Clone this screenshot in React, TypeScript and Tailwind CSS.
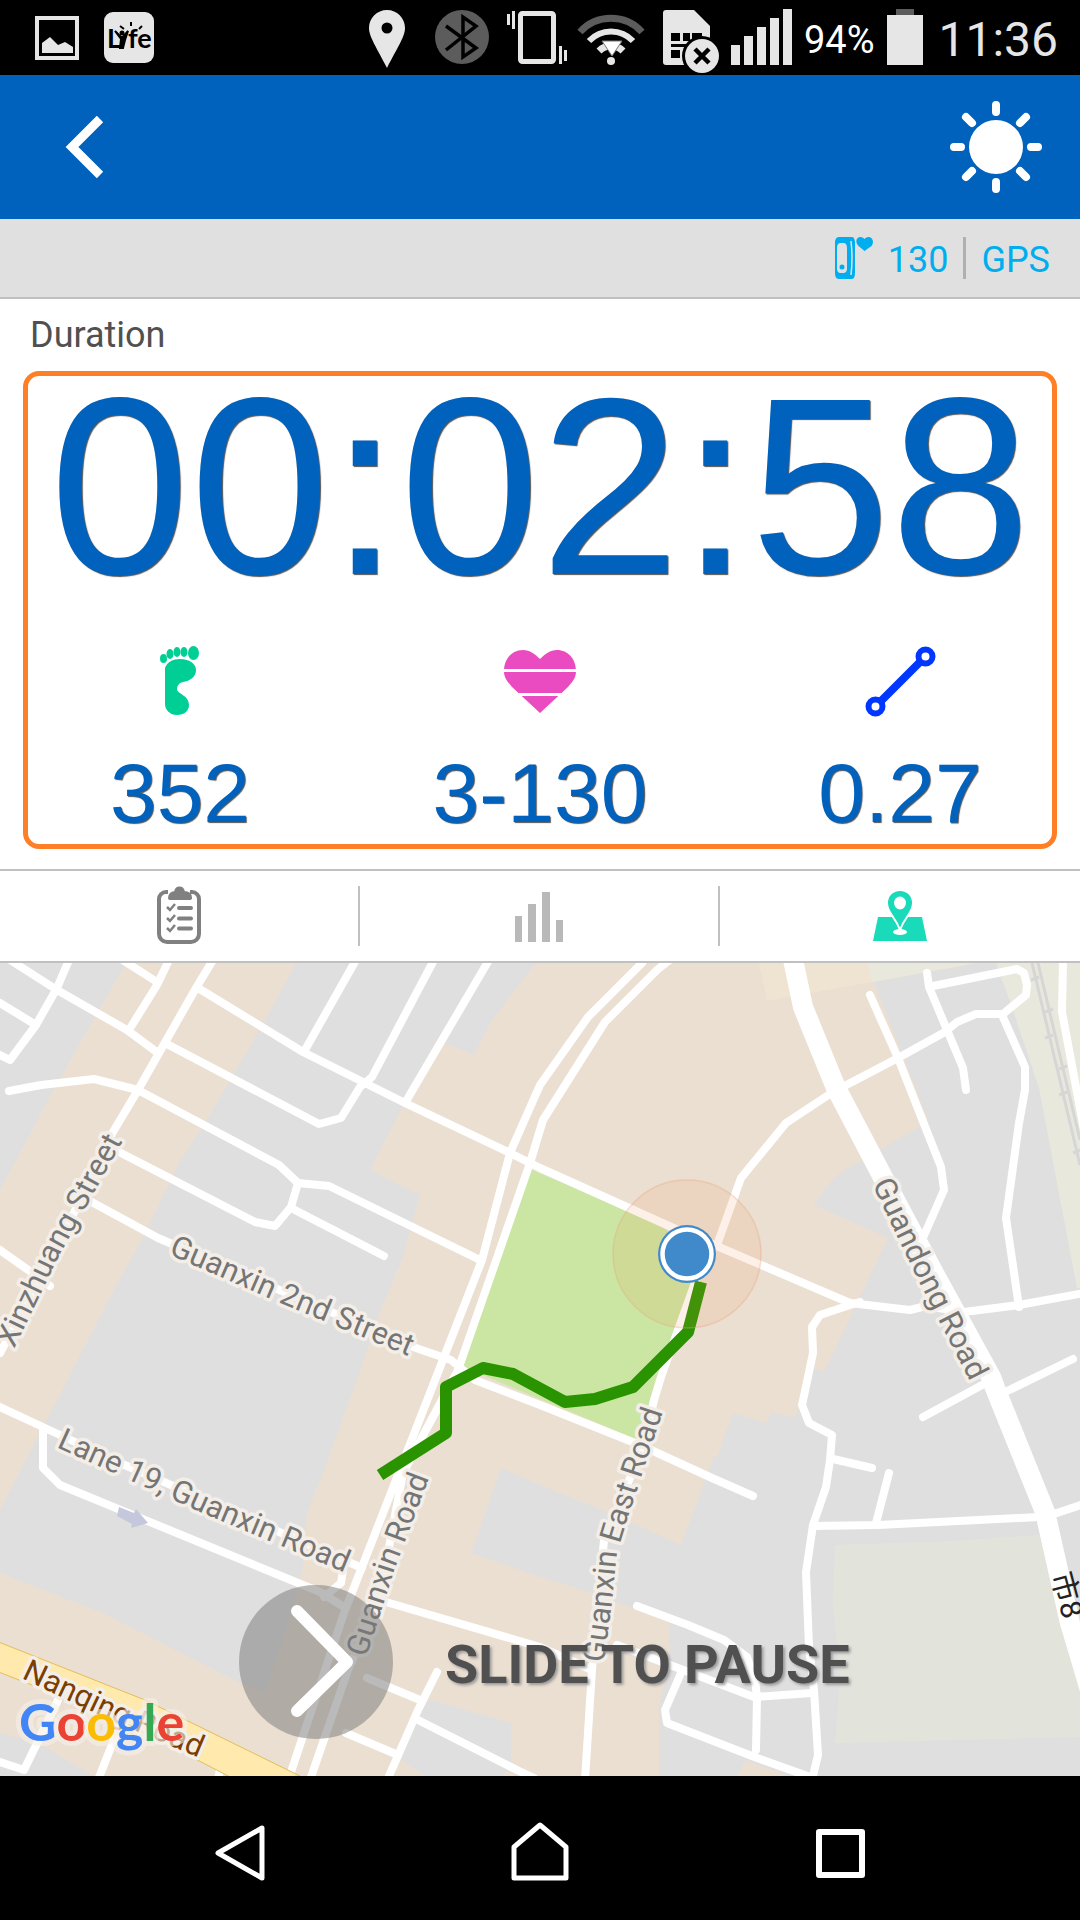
import React, { useState } from 'react';

const tabs = [
  { id: 'log', label: 'Workout log' },
  { id: 'chart', label: 'Charts' },
  { id: 'map', label: 'Map' },
];

// Blocks drawn over the beige base of the map
const greyBlocks = [
  '0,963 126,963 96,1015 52,1093 0,1190',
  '296,963 269,1013 238,1067 207,1120 179,1163 145,1233 110,1297 69,1377 45,1423 0,1510 0,1573 103,1613 234,1680 265,1692 286,1630 303,1567 307,1513 324,1470 358,1377 368,1347 382,1307 403,1257 420,1195 370,1170 401,1110 437,1040 474,1055 492,1020 536,963',
  '874,982 977,963 1080,963 1080,1776 659,1776 659,1707 669,1663 670,1623 592,1593 540,1577 471,1553 501,1468 540,1485 609,1513 681,1545 714,1456 717,1457 733,1413 767,1423 771,1412 795,1418 814,1368 824,1372 860,1297 888,1238 814,1205 826,1187 840,1173 879,1150 919,1127 929,1122',
  '424,1698 511,1723 511,1770 500,1776 425,1776 401,1760',
  '0,1733 38,1743 93,1776 0,1776',
];

const roads = [
  '10,960 57,990 127,1030 158,1053',
  '69,960 57,988 36,1025 10,1060 0,1055',
  '0,1003 36,1025',
  '124,961 157,982',
  '169,960 157,985 129,1030',
  '213,960 196,988 138,1090 110,1137 69,1223 0,1353',
  '198,988 303,1052 405,1103 510,1153 540,1168 678,1230 719,1247 850,1303 910,1310 926,1306 964,1312 1019,1305 1084,1293',
  '356,960 305,1050',
  '434,960 372,1077 360,1087 341,1118 319,1124 165,1043',
  '489,960 405,1103',
  '9,1091 41,1085 94,1079 138,1090 279,1165 298,1183 329,1186 480,1260',
  '119,1152 255,1222 275,1226 291,1207 298,1183',
  '291,1208 384,1256',
  '88,1200 158,1238 310,1303 413,1347 451,1360 475,1380 540,1405 640,1445 712,1478 753,1496',
  '0,1250 31,1272 50,1286',
  '642,963 588,1017 540,1085 510,1153 482,1260 444,1357 439,1370 344,1613 291,1772',
  '672,958 657,970 605,1022 543,1120 530,1163 458,1370 403,1473 379,1600 348,1670 310,1780',
  '717,1245 741,1178 786,1123 833,1092 898,1058 945,1032 957,1022 976,1014 1003,1014 1026,995 1027,985 1024,973 1017,969 933,986',
  '927,973 929,987 963,1068 966,1090',
  '870,995 898,1058 941,1167 944,1190 922,1240',
  '1002,1015 1025,1067 1025,1090 1019,1123 1006,1218 1019,1307',
  '1063,960 1062,1012 1084,1130',
  '860,1302 850,1305 820,1315 812,1327 813,1353 808,1377 802,1405 809,1423 832,1435 830,1460 826,1487 813,1525 806,1572 809,1647 814,1690 818,1755 812,1780',
  '833,1459 872,1468',
  '889,1473 876,1523',
  '813,1526 878,1525 1039,1517 1057,1513 1084,1504',
  '923,1417 984,1384',
  '1003,1393 1073,1359',
  '697,1277 661,1377 654,1400 643,1447 604,1540 592,1670 585,1780',
  '637,1606 688,1625 724,1640 747,1657 755,1680 757,1697 756,1750',
  '617,1645 678,1668 754,1697 812,1693',
  '681,1673 665,1710 667,1723 757,1758 813,1778',
  '386,1602 540,1647 592,1670',
  '0,1407 45,1428 120,1463 344,1560 362,1568',
  '43,1428 43,1468 60,1485 320,1592 344,1607',
  '343,1570 341,1583 324,1597',
  '367,1678 420,1700',
  '437,1672 418,1710 389,1776',
  '418,1720 517,1770 534,1778',
  '346,1733 398,1755',
  '0,1762 24,1770 58,1700',
  '98,1780 115,1737',
  '218,1780 220,1770',
];

const streets = [
  { id: 'xinzhuang', name: 'Xinzhuang Street', d: 'M14 1349 L60 1254 L130 1128', color: '#757575' },
  { id: 'guanxin2', name: 'Guanxin 2nd Street', d: 'M168 1254 L280 1303 L430 1365', color: '#757575' },
  { id: 'lane19', name: 'Lane 19, Guanxin Road', d: 'M56 1447 L200 1512 L372 1584', color: '#757575' },
  { id: 'guanxin', name: 'Guanxin Road', d: 'M366 1658 L395 1568 L436 1460', color: '#757575' },
  { id: 'guanxineast', name: 'Guanxin East Road', d: 'M604 1663 L611 1610 L617 1553 L627 1520 L670 1390', color: '#757575' },
  { id: 'guandong', name: 'Guandong Road', d: 'M872 1184 L920 1284 L980 1401', color: '#757575' },
  { id: 'nanqing', name: 'Nanqing Road', d: 'M21 1678 L110 1720 L216 1765', color: '#7a3e00' },
];

function StatusBar() {
  return (
    <div className="flex h-[75px] items-center justify-between bg-black pl-[35px] pr-[22px] text-[#e6e6e6]">
      <div className="flex items-center gap-6">
        <svg className="h-[75px] w-[45px]" viewBox="35 0 45 75" fill="none">
          <rect x="37" y="18" width="40" height="40" stroke="#e6e6e6" strokeWidth="4" />
          <path d="M42 53v-10l8-6 8 8 7-3 8 5v6z" fill="#e6e6e6" />
        </svg>
        <svg className="h-[75px] w-[50px]" viewBox="104 0 50 75">
          <rect x="104" y="12" width="50" height="51" rx="9" fill="#e6e6e6" />
          <text x="107" y="48" fontSize="27" fontFamily="Lato, sans-serif" fontWeight="700" fill="#000">L</text>
          <text x="128" y="48" fontSize="27" fontFamily="Lato, sans-serif" fontWeight="700" fill="#000">fe</text>
          <circle cx="122" cy="33" r="2.5" />
          <path d="M115 31l6 6h2l5-6-3 9-2 8h-3l1-9zM120 26l4 3M131 22v4M142 26l-3 3" stroke="#000" strokeWidth="2" fill="#000" />
        </svg>
      </div>
      <div className="flex items-center gap-3">
        <svg className="h-[75px] w-14" viewBox="366 0 56 75">
          <path fillRule="evenodd" fill="#e6e6e6" d="M388 10c10 0 18 8 18 18 0 9-8 20-18 40-10-20-18-31-18-40 0-10 8-18 18-18zm0 12.500a5.500 5.500 0 1 0 0 11 5.500 5.500 0 1 0 0-11z" />
        </svg>
        <svg className="h-[75px] w-[61px]" viewBox="434 0 61 75">
          <circle cx="463" cy="37" r="27" fill="#5c5c5c" />
          <path d="M447 26l30 22-13 9V17l13 9-30 24" fill="none" stroke="#000" strokeWidth="3.500" />
        </svg>
        <svg className="h-[75px] w-[60px] overflow-visible" viewBox="507 0 60 75" fill="#e6e6e6">
          <rect x="521.500" y="13.500" width="33" height="48" rx="2" fill="none" stroke="#e6e6e6" strokeWidth="5" />
          <path d="M508 14h3v11h-3zM513 11h3v18h-3zM560 46h3v18h-3zM565 50h3v11h-3z" />
        </svg>
        <svg className="h-[75px] w-[71px] overflow-visible" viewBox="579 0 71 75" fill="none">
          <path d="M581 32a42 42 0 0 1 62 0" stroke="#5c5c5c" strokeWidth="7" />
          <path d="M590 41a30 30 0 0 1 44 0" stroke="#e6e6e6" strokeWidth="6" />
          <path d="M600 51a17 17 0 0 1 24 0" stroke="#e6e6e6" strokeWidth="7" />
          <path d="M603 41h20l-10 15z" fill="#fff" stroke="#777" />
          <circle cx="612" cy="61" r="4" fill="#e6e6e6" />
        </svg>
        <svg className="h-[75px] w-[58px] overflow-visible" viewBox="662 0 58 75">
          <path d="M667 10h28l16 16v38a1 1 0 0 1-1 1h-43a3 3 0 0 1-3-3V13a3 3 0 0 1 3-3z" fill="#e6e6e6" />
          <path d="M672 33h9v8h-9zM684 33h7v8h-7zM693 33h10v8h-10zM672 44h22v3h-22zM672 50h9v8h-9zM684 50h8v8h-8z" />
          <circle cx="703" cy="56" r="20" />
          <circle cx="703" cy="56" r="17" fill="#e6e6e6" />
          <path d="M696 49l14 14m0-14l-14 14" stroke="#000" strokeWidth="4.500" />
        </svg>
        <svg className="h-[75px] w-[61px]" viewBox="732 0 61 75" fill="#e6e6e6">
          <path d="M732 45h9v20h-9zM745 36h9v29h-9zM758 27h9v38h-9zM771 18h9v47h-9zM784 9h9v56h-9z" />
        </svg>
        <span className="pt-1 text-[38px] leading-none text-white">94%</span>
        <svg className="h-[75px] w-10" viewBox="888 0 40 75">
          <rect x="898" y="9" width="18" height="6" fill="#5c5c5c" />
          <rect x="889" y="15" width="36" height="50" fill="#e6e6e6" />
        </svg>
        <span className="pt-1 text-[48px] leading-none">11:36</span>
      </div>
    </div>
  );
}

function TabIcon({ id }: { id: string }) {
  if (id === 'log') {
    return (
      <svg className="h-[60px] w-[60px]" viewBox="149 886 60 60" fill="none" stroke="#808080">
        <path d="M168 892h-2a7 7 0 0 0-7 7v35a8 8 0 0 0 8 8h24a8 8 0 0 0 8-8v-35a7 7 0 0 0-7-7h-2" strokeWidth="4" />
        <path d="M169 898c0-4 3-6 6-6 1-6 8-6 9 0 4 0 7 2 7 6 0 1-1 1-2 1h-18c-1 0-2 0-2-1z" fill="#808080" strokeWidth="2" />
        <path d="M167 907l3 3 5-6M167 918l3 3 5-6M167 928l3 3 5-6" strokeWidth="2.500" />
        <path d="M179 908h12M179 918.500h12M179 928.500h12" strokeWidth="4" strokeLinecap="round" />
      </svg>
    );
  }
  if (id === 'chart') {
    return (
      <svg className="h-[60px] w-[60px]" viewBox="510 886 60 60" fill="#b9b9b9">
        <path d="M516 916h7v26h-7zM529 904h8v38h-8zM543 892h8v50h-8zM557 920h7v22h-7z" />
      </svg>
    );
  }
  return (
    <svg className="h-[60px] w-[60px]" viewBox="870 886 60 60" fill="#1adbb9">
      <path d="M878 917h44l5 24h-54z" />
      <path d="M900 890c8 0 13 6 13 13 0 10-8 13-13 27-5-14-13-17-13-27 0-7 5-13 13-13z" stroke="#fff" strokeWidth="2" />
      <ellipse cx="900" cy="903" rx="6" ry="6.500" fill="#fff" />
      <ellipse cx="900" cy="932" rx="7" ry="3" fill="#fff" />
    </svg>
  );
}

function RouteMap() {
  return (
    <svg className="absolute inset-0 h-full w-full" viewBox="0 963 1080 813" preserveAspectRatio="xMidYMid slice" fontFamily="Roboto, sans-serif" role="img" aria-label="Route map">
      <rect x="0" y="963" width="1080" height="813" fill="#ebdfd1" />
      {greyBlocks.map((points, i) => <polygon key={i} points={points} fill="#dfdfdf" />)}
      <polygon points="759,963 767,1001 872,982 867,963" fill="#efe4d1" />
      <polygon points="867,963 872,982 977,963" fill="#e9e8dc" />
      <polygon points="996,963 1014,1013 1039,1088 1077,1288 1080,1288 1080,963" fill="#e9e8dc" />
      <polygon points="835,1545 953,1541 1039,1535 1051,1573 1080,1690 1080,1737 835,1743 840,1677 833,1603" fill="#e2e4dc" />
      <polygon points="738,1776 745,1760 788,1776" fill="#ebdfd1" />
      <polygon points="530,1169 661,1225 700,1262 698,1286 638,1440 461,1366" fill="#cbe6a3" />
      <path d="M1032 963L1080 1165M1038 963L1080 1140" stroke="#d6d6d6" strokeWidth="3" />
      <path d="M1031 980l8-3M1045 1012l8-3M1045 1038l8-3M1059 1069l8-3M1059 1095l8-3M1073 1153l7-3" stroke="#d6d6d6" strokeWidth="3" />
      <g fill="none" stroke="#fff" strokeWidth="8" strokeLinecap="round" strokeLinejoin="round">
        {roads.map((points, i) => <polyline key={i} points={points} />)}
        <polyline points="791,950 803,1007 836,1088 888,1187 936,1277 991,1377 995,1388 1045,1512 1070,1623 1090,1690" strokeWidth="20" />
      </g>
      <polygon points="-4,1641 145,1700 300,1776 236,1780 114,1717 -4,1671" fill="#ffe9ad" stroke="#e3bd5c" />
      <path d="M119 1507l15 6 2-4 12 14-17 5 1-4-15-8z" fill="#c5c8dc" />

      {streets.map(street => (
        <g key={street.id}>
          <path id={street.id} d={street.d} fill="none" />
          <text fontSize="31" fill={street.color} stroke="#f3eee8" strokeWidth="7" strokeLinejoin="round" paintOrder="stroke">
            <textPath href={`#${street.id}`}>{street.name}</textPath>
          </text>
        </g>
      ))}
      <text transform="translate(1051 1575) rotate(75)" fontSize="30" fontFamily="Roboto, 'Noto Sans CJK TC', sans-serif" fill="#222">市8</text>

      {/* Recorded track and current position */}
      <polyline points="380,1475 446,1433 446,1387 483,1368 513,1374 565,1402 595,1399 633,1387 688,1332 701,1282" fill="none" stroke="#299400" strokeWidth="12" strokeLinejoin="round" />
      <circle cx="687" cy="1254" r="74" fill="#f08a50" fillOpacity="0.13" stroke="#e9a47e" strokeOpacity="0.35" strokeWidth="1.500" />
      <circle cx="687" cy="1254" r="29" fill="#4089ca" />
      <circle cx="687" cy="1254" r="24.500" fill="#4089ca" stroke="#fff" strokeWidth="4.500" />

      <text x="19" y="1741" fontSize="52" fontFamily="Lato, sans-serif" fontWeight="700" stroke="#f5f0ea" strokeOpacity="0.6" strokeWidth="10" strokeLinejoin="round" paintOrder="stroke">
        <tspan fill="#4285f4">G</tspan>
        <tspan fill="#ea4335">o</tspan>
        <tspan fill="#fbbc05">o</tspan>
        <tspan fill="#4285f4">g</tspan>
        <tspan fill="#34a853">l</tspan>
        <tspan fill="#ea4335">e</tspan>
      </text>
    </svg>
  );
}

export default function App() {
  const [activeTab, setActiveTab] = useState('map');

  return (
    <div className="flex min-h-screen flex-col bg-white font-[Roboto,sans-serif]">
      <StatusBar />

      <header className="flex h-36 items-center justify-between bg-[#0062bd] pl-[52px] pr-[30px]">
        <button aria-label="Back" className="flex h-16 w-16 items-center justify-center">
          <svg className="h-16 w-16" viewBox="52 115 64 64" fill="none">
            <path d="M100 119L72 147L100 175" stroke="#fff" strokeWidth="9" />
          </svg>
        </button>
        <button aria-label="Weather">
          <svg className="h-[108px] w-[108px]" viewBox="942 93 108 108">
            <circle cx="996" cy="147" r="27" fill="#fff" />
            <path d="M996 105v7M996 182v7M954 147h7M1031 147h7M966 117l6 6M1020 171l6 6M1026 117l-6 6M972 171l-6 6" stroke="#fff" strokeWidth="8" strokeLinecap="round" />
          </svg>
        </button>
      </header>

      <div className="flex h-20 items-center justify-end gap-[15px] border-b-2 border-[#c0c0c0] bg-[#e0e0e0] pr-[30px] text-[36px] text-[#00aeef]">
        <svg className="h-[42px] w-[38px]" viewBox="835 237 38 42">
          <path fillRule="evenodd" fill="#00aeef" d="M839 237h13c2 0 3 3 3 6v30c0 3-1 6-3 6h-13c-3 0-4-3-4-6v-30c0-3 1-6 4-6zm2 6c-3 0-4 2-4 5v20c0 3 1 5 4 5h2c3 0 4-2 4-5v-20c0-3-1-5-4-5z" />
          <circle cx="842" cy="267" r="2.500" fill="#00aeef" />
          <path d="M851 241q2 17 0 34" stroke="#e0e0e0" strokeWidth="1.500" fill="none" />
          <path d="M864.500 251l-6-5c-4-4-2-9 2-9 2 0 3 1 4 2 1-1 2-2 4-2 4 0 6 5 3 9z" fill="#00aeef" />
        </svg>
        <span className="pt-1">130</span>
        <span className="h-[42px] w-[3px] bg-[#b0b0b0]" />
        <span className="pt-1">GPS</span>
      </div>

      <main className="flex flex-1 flex-col">
        <section className="px-[23px] pb-5">
          <h1 className="flex h-[72px] items-center px-[7px] text-[36px] text-[#505050]">Duration</h1>
          <div className="rounded-2xl border-5 border-[#ff7f27] pb-[3px] font-['Liberation_Sans',sans-serif] text-[#0062bd] [text-shadow:1px_1px_1px_#555]">
            <div className="h-[269px] text-center text-[252px] leading-[222px]">00:02:58</div>
            <div className="-mx-7 grid grid-cols-3 justify-items-center">
              <div className="flex flex-col items-center">
                <svg className="h-[72px] w-[72px]" viewBox="144 645 72 72" fill="#00cf95">
                  <ellipse cx="163.500" cy="658.500" rx="3.500" ry="4.500" />
                  <ellipse cx="170" cy="654" rx="3.500" ry="5" />
                  <ellipse cx="177" cy="652" rx="3.500" ry="5" />
                  <ellipse cx="184" cy="652" rx="3.500" ry="5" />
                  <ellipse cx="193.500" cy="653" rx="5.500" ry="7" />
                  <path d="M165 668c2-6 8-9 15-9 10 0 16 5 16 11 0 7-6 11-13 12-4 1-6 4-6 7 0 5 12 6 12 16 0 6-5 10-12 10s-12-5-12-11z" />
                </svg>
                <span className="mt-7 text-[84px] leading-[96px]">352</span>
              </div>
              <div className="flex flex-col items-center">
                <svg className="h-[72px] w-[72px]" viewBox="504 645 72 72">
                  <path d="M540 713l-28-26c-6-7-8-10-8-16 0-12 8-21 19-21 7 0 12 4 17 9 5-5 10-9 17-9 11 0 19 9 19 21 0 6-2 9-8 16z" fill="#eb4bc0" />
                  <path d="M504 670.500h72M504 694.500h72" stroke="#fff" strokeWidth="3" />
                </svg>
                <span className="mt-7 text-[84px] leading-[96px]">3-130</span>
              </div>
              <div className="flex flex-col items-center">
                <svg className="h-[72px] w-[72px]" viewBox="864 645 72 72" fill="none" stroke="#0037ff">
                  <circle cx="875.500" cy="706.500" r="7" strokeWidth="6" />
                  <circle cx="925.500" cy="656.500" r="7" strokeWidth="6" />
                  <path d="M880 702l41-41" strokeWidth="8" />
                </svg>
                <span className="mt-7 text-[84px] leading-[96px]">0.27</span>
              </div>
            </div>
          </div>
        </section>

        <nav className="grid h-[94px] grid-cols-3 items-center border-y-2 border-[#c0c0c0]">
          {tabs.map(tab => (
            <button
              key={tab.id}
              aria-label={tab.label}
              aria-pressed={activeTab === tab.id}
              onClick={() => setActiveTab(tab.id)}
              className="flex h-[60px] items-center justify-center border-r-2 border-[#c0c0c0] last:border-r-0"
            >
              <TabIcon id={tab.id} />
            </button>
          ))}
        </nav>

        <section className="relative min-h-[813px] flex-1 overflow-hidden">
          <RouteMap />
          <div className="absolute bottom-[37px] left-[239px] flex items-center gap-[52px]">
            <button aria-label="Slide to pause" className="h-[154px] w-[154px] rounded-full bg-[#7a7a7a]/52">
              <svg className="h-[154px] w-[154px]" viewBox="239 1585 154 154" fill="none">
                <path d="M297 1611L347 1662L297 1711" stroke="#fff" strokeWidth="12" strokeLinecap="round" strokeLinejoin="round" />
              </svg>
            </button>
            <span className="pt-1 text-[54px] font-bold text-[#505050] [text-shadow:2px_2px_3px_#999]">SLIDE TO PAUSE</span>
          </div>
        </section>
      </main>

      <footer className="grid h-36 grid-cols-3 items-center bg-black px-[90px] pt-2">
        <button aria-label="Back" className="flex justify-center">
          <svg className="h-[72px] w-[72px]" viewBox="204 1816 72 72" fill="none">
            <path d="M262 1828v50l-44-25z" stroke="#fff" strokeWidth="5" strokeLinejoin="round" />
          </svg>
        </button>
        <button aria-label="Home" className="flex justify-center">
          <svg className="h-[72px] w-[72px]" viewBox="504 1816 72 72" fill="none">
            <path d="M514 1847l26-22 26 22v31h-52z" stroke="#fff" strokeWidth="5" strokeLinejoin="round" />
          </svg>
        </button>
        <button aria-label="Recent apps" className="flex justify-center">
          <svg className="h-[72px] w-[72px]" viewBox="804 1816 72 72" fill="none">
            <rect x="819" y="1832" width="43" height="43" stroke="#fff" strokeWidth="6" strokeLinejoin="round" />
          </svg>
        </button>
      </footer>
    </div>
  );
}
